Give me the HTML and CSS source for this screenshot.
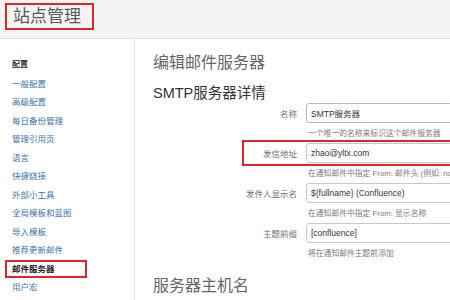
FILE: index.html
```html
<!DOCTYPE html>
<html lang="zh-CN">
<head>
    <meta charset="UTF-8">
    <title>站点管理</title>
    <link rel="stylesheet" href="styles.css">
</head>
<body>

    <!-- Header -->
    <div class="header">
        <span class="header-title">站点管理</span>
    </div>

    <div class="layout">
        <!-- Sidebar -->
        <div class="sidebar">
            <div class="side-heading">配置</div>
            <a class="side-link" href="#">一般配置</a>
            <a class="side-link" href="#">高级配置</a>
            <a class="side-link" href="#">每日备份管理</a>
            <a class="side-link" href="#">管理引用页</a>
            <a class="side-link" href="#">语言</a>
            <a class="side-link" href="#">快捷链接</a>
            <a class="side-link" href="#">外部小工具</a>
            <a class="side-link" href="#">全局模板和蓝图</a>
            <a class="side-link" href="#">导入模板</a>
            <a class="side-link" href="#">推荐更新邮件</a>
            <a class="side-link active" href="#">邮件服务器</a>
            <a class="side-link" href="#">用户宏</a>
            <a class="side-link" href="#">插件</a>
        </div>

        <!-- Main -->
        <div class="main">
            <h1>编辑邮件服务器</h1>
            <h2>SMTP服务器详情</h2>

            <div class="form">
                <div class="field">
                    <label>名称</label>
                    <input class="text focused" type="text" value="SMTP服务器">
                </div>
                <div class="desc">一个唯一的名称来标识这个邮件服务器</div>

                <div class="field marked">
                    <label>发信地址</label>
                    <input class="text" type="text" value="zhao@yltx.com">
                </div>
                <div class="desc">在通知邮件中指定 From: 邮件头 (例如: noreply@yltx.com)</div>

                <div class="field">
                    <label>发件人显示名</label>
                    <input class="text" type="text" value="${fullname} (Confluence)">
                </div>
                <div class="desc">在通知邮件中指定 From: 显示名称</div>

                <div class="field">
                    <label>主题前缀</label>
                    <input class="text" type="text" value="[confluence]">
                </div>
                <div class="desc">将在通知邮件主题前添加</div>
            </div>

            <h1 class="section">服务器主机名</h1>
        </div>
    </div>

</body>
</html>
```

FILE: styles.css
```css
/* Base */
body {
    margin: 0;
    font-family: "Liberation Sans", "Noto Sans CJK SC", sans-serif;
    background: #fff;
    color: #333;
    overflow: hidden;
}

/* Header */
.header {
    height: 38px;
    background: #f4f4f4;
    border-bottom: 1px solid #e2e2e2;
}

.header-title {
    display: inline-block;
    margin: 3px 0 0 5px;
    padding: 0 11px 0 6px;
    border: 2px solid #e0262d;
    line-height: 23px;
    font-size: 17px;
    color: #5a5a5a;
}

/* Layout */
.layout {
    display: flex;
}

.sidebar {
    width: 134px;
    flex-shrink: 0;
    border-right: 1px solid #e4e4e4;
    padding-top: 17px;
    height: 300px;
}

.side-heading {
    height: 18.5px;
    line-height: 18.5px;
    padding-left: 12px;
    font-size: 8px;
    font-weight: bold;
    color: #333;
}

.side-link {
    display: block;
    height: 18.5px;
    line-height: 18.5px;
    padding-left: 12px;
    font-size: 8.5px;
    color: #3b73af;
    text-decoration: none;
}

.side-link.active {
    box-sizing: border-box;
    width: 82px;
    margin-left: 5px;
    padding-left: 5px;
    border: 2px solid #e0262d;
    line-height: 14.5px;
    font-weight: bold;
    color: #222;
}

/* Main */
.main {
    flex: 1;
    padding-left: 18px;
    overflow: hidden;
}

.main h1 {
    margin: 14px 0 0;
    font-size: 16px;
    line-height: 20px;
    font-weight: normal;
    color: #666;
}

.main h2 {
    margin: 10px 0 0;
    font-size: 14.5px;
    line-height: 20px;
    font-weight: normal;
    color: #333;
}

.main h1.section {
    margin-top: 13px;
}

/* Form */
.form {
    width: 400px;
}

.field {
    display: flex;
    align-items: center;
    height: 20px;
    padding-left: 92px;
}

.field.marked {
    margin-left: 92px;
    padding-left: 0;
    outline: 2px solid #e0262d;
    outline-offset: 1px;
}

.field label {
    width: 52px;
    margin-right: 9px;
    text-align: right;
    font-size: 8.5px;
    color: #707070;
}

.text {
    box-sizing: border-box;
    width: 200px;
    height: 20px;
    padding: 0 4px;
    border: 1px solid #c8c8c8;
    border-radius: 3px;
    font-family: "Liberation Sans", "Noto Sans CJK SC", sans-serif;
    font-size: 8.5px;
    color: #333;
}

.text.focused {
    border-color: #a9bcd2;
}

.desc {
    height: 18px;
    padding: 2px 0 0 155px;
    line-height: 18px;
    font-size: 7.8px;
    color: #7a7a7a;
    white-space: nowrap;
}
```
